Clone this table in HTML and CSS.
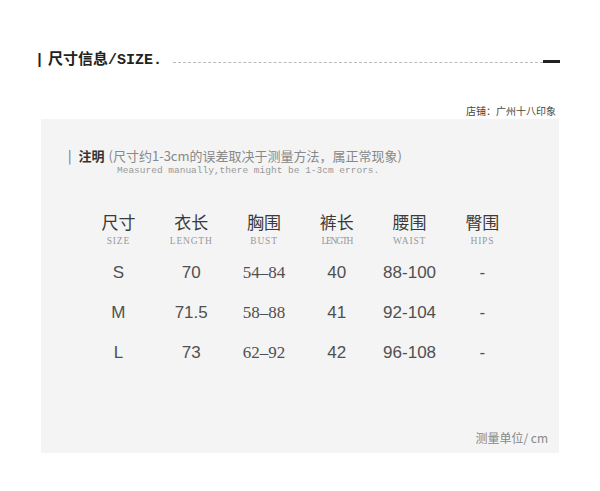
FILE: index.html
```html
<!DOCTYPE html>
<html>
<head>
<meta charset="utf-8">
<link rel="stylesheet" href="styles.css">
</head>
<body>
<div class="page">
  <div class="head">
    <span class="title"><span class="bar">|</span>尺寸信息/SIZE.</span>
    <span class="dash"></span>
    <span class="end"></span>
  </div>
  <div class="shop">店铺：广州十八印象</div>
  <div class="box">
    <div class="note">
      <div class="note-cn"><span class="nbar">|</span><b>注明</b><span class="paren">(尺寸约1-3cm的误差取决于测量方法，属正常现象)</span></div>
      <div class="note-en">Measured manually,there might be 1-3cm errors.</div>
    </div>
    <div class="table">
      <div class="col"><div class="hcn">尺寸</div><div class="hen">SIZE</div><div class="v">S</div><div class="v">M</div><div class="v">L</div></div>
      <div class="col"><div class="hcn">衣长</div><div class="hen">LENGTH</div><div class="v">70</div><div class="v">71.5</div><div class="v">73</div></div>
      <div class="col"><div class="hcn">胸围</div><div class="hen">BUST</div><div class="v serif">54–84</div><div class="v serif">58–88</div><div class="v serif">62–92</div></div>
      <div class="col"><div class="hcn">裤长</div><div class="hen squeeze">LENGTH</div><div class="v">40</div><div class="v">41</div><div class="v">42</div></div>
      <div class="col"><div class="hcn">腰围</div><div class="hen">WAIST</div><div class="v">88-100</div><div class="v">92-104</div><div class="v">96-108</div></div>
      <div class="col"><div class="hcn">臀围</div><div class="hen">HIPS</div><div class="v">-</div><div class="v">-</div><div class="v">-</div></div>
    </div>
    <div class="unit">测量单位/ cm</div>
  </div>
</div>
</body>
</html>
```

FILE: styles.css
```css
* { box-sizing: border-box; }
html, body { margin: 0; padding: 0; background: #fff; }
body { font-family: "Liberation Sans", "Noto Sans CJK SC", sans-serif; color: #333; }
.page { width: 600px; height: 491px; }
.head {
  display: flex;
  align-items: center;
  padding: 48px 40px 0 35px;
  height: 68px;
}
.title {
  font-family: "Liberation Mono", "Noto Sans CJK SC", monospace;
  font-weight: bold;
  font-size: 15px;
  color: #222;
  white-space: nowrap;
  letter-spacing: 0;
}
.bar { font-weight: bold; margin-right: 4px; }
.dash {
  flex: 1;
  margin-left: 11px;
  border-top: 1px dashed #bbb;
  height: 0;
  margin-top: 8px;
}
.end {
  width: 17px;
  height: 3px;
  background: #222;
  margin-top: 7px;
}
.shop {
  text-align: right;
  padding-right: 44px;
  margin-top: 37px;
  font-size: 10px;
  color: #444;
  line-height: 12px;
  font-family: "Noto Sans CJK SC", sans-serif;
}
.box {
  margin: 2px 41px 0 41px;
  height: 334px;
  background: #f4f4f4;
  padding-top: 28px;
  padding-bottom: 7px;
  display: flex;
  flex-direction: column;
}
.note { padding-left: 27px; }
.note-cn {
  font-family: "Noto Sans CJK SC", sans-serif;
  font-size: 13px;
  line-height: 17px;
  color: #888;
}
.nbar { color: #666; margin-right: 7px; }
.note-cn b { color: #333; font-weight: bold; margin-right: 4px; }
.paren { color: #888; }
.note-en {
  font-family: "Liberation Mono", "DejaVu Sans Mono", monospace;
  font-size: 9.5px;
  color: #999;
  padding-left: 49px;
  line-height: 10px;
  margin-top: 2px;
}
.table {
  display: flex;
  padding-left: 41px;
  margin-top: 36px;
}
.col {
  width: 72.8px;
  display: flex;
  flex-direction: column;
  align-items: center;
}
.hcn {
  font-family: "Noto Sans CJK SC", sans-serif;
  font-size: 17px;
  line-height: 20px;
  color: #3a3a3a;
}
.hen {
  font-family: "Liberation Serif", serif;
  font-size: 9.5px;
  color: #999;
  line-height: 12px;
  margin-top: 3px;
  letter-spacing: 0.8px;
}
.hen.squeeze { letter-spacing: -1.2px; }
.v {
  font-family: "Liberation Sans", sans-serif;
  font-size: 17px;
  color: #505050;
  line-height: 20px;
  height: 20px;
  margin-bottom: 20px;
}
.hen + .v { margin-top: 16px; }
.v.serif { font-family: "Liberation Serif", serif; }
.unit {
  margin-top: auto;
  text-align: right;
  padding-right: 11px;
  font-family: "Noto Sans CJK SC", sans-serif;
  font-size: 12px;
  line-height: 17px;
  color: #888;
}
```
